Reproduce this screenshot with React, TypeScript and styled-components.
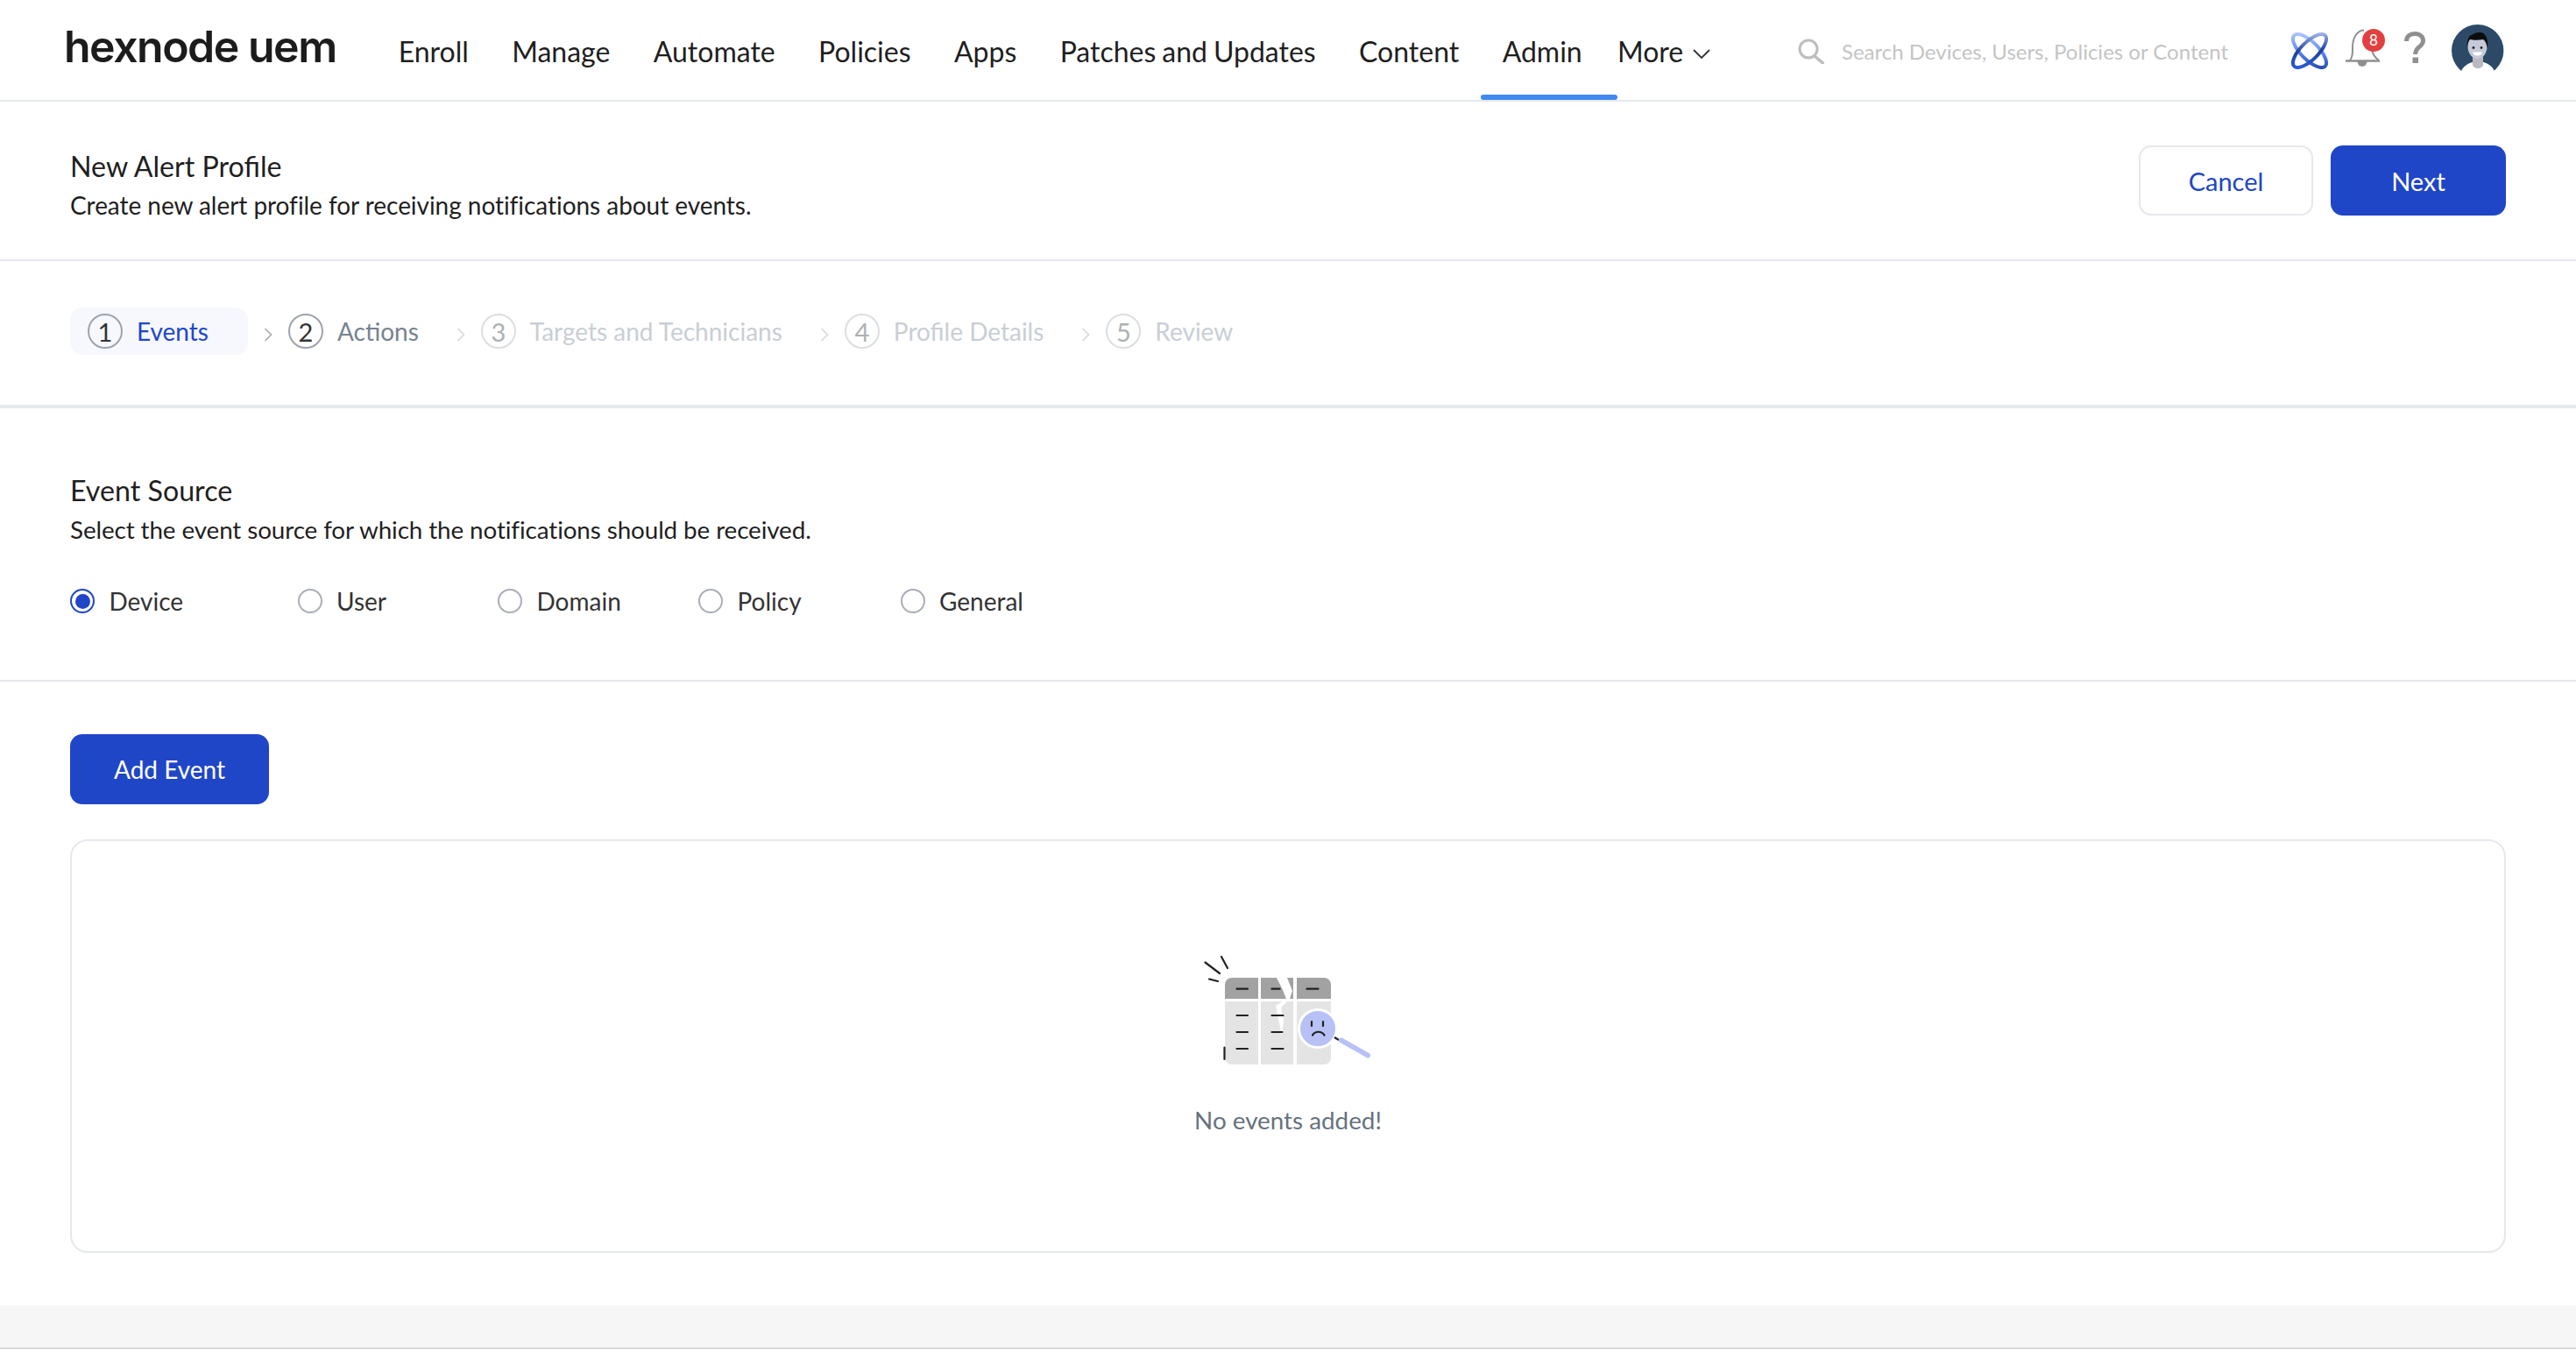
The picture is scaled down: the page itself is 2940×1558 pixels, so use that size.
import React from 'react';
import styled, { createGlobalStyle } from 'styled-components';

const Colors = {
  Ink: '#1f1f1f',
  Primary: '#2046c8',
  Accent: '#4089f0',
  Line: '#e5e8ec',
  Muted: '#76838f',
  Faded: '#c9ced5',
  Icon: '#8f8f8f',
};

const Global = createGlobalStyle`
  html, body { margin: 0; padding: 0; background: #fff; }
  body { font-family: Lato, "Liberation Sans", sans-serif; color: ${Colors.Ink}; }
  * { box-sizing: border-box; }
`;

const Page = styled.div`
  width: 2940px;
  height: 1558px;
  display: flex;
  flex-direction: column;
  overflow: hidden;
`;

const Header = styled.header`
  height: 116px;
  flex: none;
  display: flex;
  align-items: flex-start;
  padding: 0 82px 0 73px;
  border-bottom: 2px solid ${Colors.Line};
`;

const Logo = styled.div`
  width: 310px;
  margin-top: 23px;
  margin-right: 47px;
  font-family: Inter, sans-serif;
  font-size: 50px;
  line-height: 60px;
  font-weight: 600;
  letter-spacing: -1.500px;
  white-space: nowrap;
  color: #1c1c1c;
`;

const Nav = styled.nav`
  display: flex;
  height: 114px;
`;

const NavItem = styled.a<{ $active?: boolean; $flush?: boolean }>`
  position: relative;
  display: flex;
  align-items: center;
  gap: 11px;
  padding: 2px 24.700px 0 ${p => (p.$flush ? '0' : '24.700px')};
  min-width: ${p => (p.$active ? '156px' : '0')};
  font-size: 32px;
  word-spacing: -1.250px;
  white-space: nowrap;

  ${p =>
    p.$active &&
    `&:after {
      content: '';
      position: absolute;
      left: 0;
      right: 0;
      bottom: 0;
      height: 6px;
      border-radius: 3px;
      background: ${Colors.Accent};
    }`}
`;

const MoreChevron = styled.svg`
  margin-top: 6px;
`;

const Search = styled.div`
  margin-left: auto;
  margin-top: 44px;
  display: flex;
  align-items: center;
  gap: 20px;
  margin-right: 72px;
  height: 29px;
  font-size: 24px;
  color: #c4c4c4;
  white-space: nowrap;
`;

const IconSlot = styled.span<{ $top: number; $gap: number }>`
  position: relative;
  display: block;
  margin-top: ${p => p.$top}px;
  margin-right: ${p => p.$gap}px;
  line-height: 0;
`;

const Badge = styled.span`
  position: absolute;
  top: 0;
  left: 19px;
  width: 26px;
  height: 26px;
  border-radius: 50%;
  background: #e24040;
  color: #fff;
  font-size: 17px;
  line-height: 26px;
  text-align: center;
`;

const TitleBar = styled.section`
  height: 182px;
  flex: none;
  display: flex;
  align-items: center;
  justify-content: space-between;
  padding: 0 80px;
  border-bottom: 2px solid ${Colors.Line};
`;

const TitleText = styled.div`
  padding-top: 13px;
`;

const Title = styled.h1`
  margin: 0;
  font-size: 32.200px;
  line-height: 44px;
  font-weight: 400;
`;

const Desc = styled.p`
  margin: 0;
  font-size: 28px;
  line-height: 45px;
  letter-spacing: -0.050px;
`;

const SourceDesc = styled(Desc)`
  letter-spacing: -0.100px;
  font-size: 27.800px;
`;

const Actions = styled.div`
  display: flex;
  gap: 20px;
`;

const Btn = styled.button<{ $ghost?: boolean }>`
  height: 80px;
  width: ${p => (p.$ghost ? '199px' : '200px')};
  border-radius: 14px;
  font: inherit;
  font-size: 29px;
  border: ${p => (p.$ghost ? `2px solid ${Colors.Line}` : 'none')};
  background: ${p => (p.$ghost ? '#fff' : Colors.Primary)};
  color: ${p => (p.$ghost ? Colors.Primary : '#fff')};
`;

const AddButton = styled(Btn)`
  width: 227px;
  font-size: 28px;
`;

const StepBar = styled.section`
  height: 168px;
  flex: none;
  display: flex;
  align-items: flex-start;
  padding: 53px 80px 0;
  border-bottom: 4px solid ${Colors.Line};
`;

const Step = styled.div<{ $active?: boolean }>`
  height: 54px;
  display: flex;
  align-items: center;
  gap: 16px;
  padding: ${p => (p.$active ? '0 45px 0 20px' : '0 25px 0 0')};
  border-radius: 14px;
  background: ${p => (p.$active ? '#f6f8fe' : 'transparent')};
  font-size: 28px;
  white-space: nowrap;
`;

type StepState = 'active' | 'ready' | 'off';

const StepNum = styled.span<{ $state: StepState }>`
  width: 40px;
  height: 40px;
  flex: none;
  display: flex;
  align-items: center;
  justify-content: center;
  border-radius: 50%;
  font-size: 29px;
  border: 2px solid ${p => (p.$state === 'off' ? '#dcdee2' : '#9ea3ac')};
  color: ${p => (p.$state === 'off' ? '#aeb0b3' : '#333')};
`;

const StepLabel = styled.span<{ $state: StepState }>`
  color: ${p =>
    p.$state === 'active' ? Colors.Primary : p.$state === 'ready' ? Colors.Muted : Colors.Faded};
`;

const StepArrow = styled.svg`
  flex: none;
  margin: 23px 18px 0 18px;
`;

const SourceSection = styled.section`
  height: 312px;
  flex: none;
  padding: 72px 80px 0;
  border-bottom: 2px solid ${Colors.Line};
`;

const RadioRow = styled.div`
  display: grid;
  grid-template-columns: 259.500px 228.500px 229px 230.500px auto;
  justify-content: start;
  margin-top: 45px;
`;

const RadioItem = styled.label`
  display: flex;
  align-items: center;
  gap: 16.500px;
  height: 28px;
  font-size: 28px;
  color: #333;
`;

const RadioMark = styled.span<{ $on?: boolean }>`
  width: 28px;
  height: 28px;
  flex: none;
  display: flex;
  align-items: center;
  justify-content: center;
  border-radius: 50%;
  border: 2.500px solid ${p => (p.$on ? Colors.Primary : '#a9aeb8')};

  &:after {
    content: '';
    display: ${p => (p.$on ? 'block' : 'none')};
    width: 17px;
    height: 17px;
    border-radius: 50%;
    background: ${Colors.Primary};
  }
`;

const EventsSection = styled.section`
  flex: 1;
  padding: 60px 80px 0;
`;

const EmptyCard = styled.div`
  height: 472px;
  margin-top: 40px;
  padding-top: 120px;
  display: flex;
  flex-direction: column;
  align-items: center;
  border: 2px solid ${Colors.Line};
  border-radius: 20px;
`;

const EmptyText = styled.div`
  margin-top: 20px;
  font-size: 27.800px;
  line-height: 38px;
  color: #66727e;
`;

const FooterStrip = styled.div`
  height: 50px;
  flex: none;
  margin-bottom: 18px;
  background: #f6f6f6;
  border-bottom: 2px solid #d9d9d9;
`;

const SearchIcon = () => (
  <svg width="30" height="29" viewBox="0 0 30 29" fill="none" stroke="#bdbdbd">
    <circle cx="12" cy="12" r="10" strokeWidth="3" />
    <path d="M19 20l9.500 8" strokeWidth="3.500" strokeLinecap="round" />
  </svg>
);

const OrbitIcon = () => (
  <svg width="42" height="42" viewBox="0 0 42 42" fill="none">
    <defs>
      <linearGradient id="orbA" x1="4" y1="2" x2="38" y2="40" gradientUnits="userSpaceOnUse">
        <stop offset="0" stopColor="#c9d8fc" />
        <stop offset="0.5" stopColor="#5f8df2" />
        <stop offset="1" stopColor="#173a9e" />
      </linearGradient>
      <linearGradient id="orbB" x1="38" y1="2" x2="4" y2="40" gradientUnits="userSpaceOnUse">
        <stop offset="0" stopColor="#c9d8fc" />
        <stop offset="0.5" stopColor="#1f3f9e" />
        <stop offset="1" stopColor="#2f66f0" />
      </linearGradient>
    </defs>
    <ellipse cx="21" cy="21" rx="25" ry="10" transform="rotate(45 21 21)" stroke="url(#orbA)" strokeWidth="4" />
    <ellipse cx="21" cy="21" rx="25" ry="10" transform="rotate(-45 21 21)" stroke="url(#orbB)" strokeWidth="4" />
  </svg>
);

const BellIcon = () => (
  <svg width="45" height="44" viewBox="0 0 45 44" fill="none" stroke={Colors.Icon}>
    <path d="M5 36c3-4 3-8 3-15C8 9 14 1.500 21 1.500" strokeWidth="2" />
    <path d="M30 24c1 5 4 9 8 12" strokeWidth="2" />
    <path d="M0 36.500h39" strokeWidth="2.500" />
    <path d="M13.500 37h11a5.500 6 0 0 1-11 0z" fill={Colors.Icon} stroke="none" />
  </svg>
);

const HelpIcon = () => (
  <svg width="24" height="36" viewBox="0 0 24 36" fill="none" stroke={Colors.Icon}>
    <path d="M2.500 11C2.500 5 7 2.500 12 2.500c6 0 9.500 3.500 9.500 8 0 4.500-4 6.500-6 8.500-2 2-2.800 3-2.800 7" strokeWidth="5" />
    <path d="M9.500 29.500h6.500V36H9.500z" fill={Colors.Icon} stroke="none" />
  </svg>
);

const AvatarIcon = () => (
  <svg width="60" height="54" viewBox="0 0 60 54">
    <circle cx="29.700" cy="29.700" r="29.700" fill="#2c4a68" />
    <path d="M10 56c2-9 12-14 20-14s18 5 20 14z" fill="#fff" />
    <path d="M24 36h12v10c0 2-3 4-6 4s-6-2-6-4z" fill="#b9babf" />
    <ellipse cx="29.500" cy="25" rx="11" ry="14" fill="#c6cad8" />
    <path d="M18 27c-1-8 1-15 7-16 2-2 8-3 11-1 4 2 6 9 5 17-1-4-2-8-5-10-5 1-11 1-15 0-2 2-3 6-3 10z" fill="#0c0c0c" />
    <circle cx="25" cy="26.500" r="1.400" fill="#222" />
    <circle cx="34" cy="26.500" r="1.400" fill="#222" />
    <path d="M24 31.500h11c-1 3-3 4-5.500 4s-4.500-1-5.500-4z" fill="#fff" />
  </svg>
);

const NoEventsArt = () => (
  <svg width="260" height="160" viewBox="0 0 260 160" fill="none">
    <path d="M58 60V44a8 8 0 0 1 8-8h30v24z" fill="#a2a2a2" />
    <path d="M99 36h37v24H99z" fill="#a2a2a2" />
    <path d="M140 36h31a8 8 0 0 1 8 8v16h-39z" fill="#a2a2a2" />
    <path d="M58 63h38v72H66a8 8 0 0 1-8-8z" fill="#e4e4e4" />
    <path d="M99 63h37v72H99z" fill="#e4e4e4" />
    <path d="M140 63h39v64a8 8 0 0 1-8 8h-31z" fill="#e4e4e4" />
    <path d="M117 36l7 14 4 10-12 8 7 34 2-17-3-15 10-10 3-9-6-15z" fill="#fff" />
    <g stroke="#222" strokeWidth="2.200" strokeLinecap="round">
      <path d="M71.500 48.700h12.500M111.500 48.700h9M151.500 48.700h13" />
      <path d="M71.500 79h12.500M111.500 79h13M71.500 98h12.500M111.500 98h12M71.500 117h12.500M111.500 117h13" />
      <path d="M57.500 115.500v13.500M35.500 18.500L52 31M54 12l7 13M40 37.500l10 2.500" />
    </g>
    <circle cx="164" cy="94" r="21.500" fill="#b7c1f5" stroke="#fff" strokeWidth="3" />
    <path d="M157 86v5M170 86v5" stroke="#222" strokeWidth="2.200" strokeLinecap="round" />
    <path d="M158 101.500c3.500-5 10-5 13.500 0" stroke="#222" strokeWidth="2.200" strokeLinecap="round" />
    <path d="M183 104l5 3" stroke="#222" strokeWidth="2.500" />
    <path d="M191 107.500l30 17" stroke="#b7c1f5" strokeWidth="6" strokeLinecap="round" />
  </svg>
);

const navItems = ['Enroll', 'Manage', 'Automate', 'Policies', 'Apps', 'Patches and Updates', 'Content'];

const steps: { label: string; state: StepState }[] = [
  { label: 'Events', state: 'active' },
  { label: 'Actions', state: 'ready' },
  { label: 'Targets and Technicians', state: 'off' },
  { label: 'Profile Details', state: 'off' },
  { label: 'Review', state: 'off' },
];

const sources = ['Device', 'User', 'Domain', 'Policy', 'General'];

export default function App() {
  return (
    <Page>
      <Global />
      <Header>
        <Logo>hexnode uem</Logo>
        <Nav>
          {navItems.map(item => (
            <NavItem key={item}>{item}</NavItem>
          ))}
          <NavItem $active>Admin</NavItem>
          <NavItem $flush>
            More
            <MoreChevron width="20" height="11" viewBox="0 0 20 11" fill="none" stroke="#333" strokeWidth="1.800">
              <path d="M1 1l9 9 9-9" />
            </MoreChevron>
          </NavItem>
        </Nav>
        <Search>
          <SearchIcon />
          Search Devices, Users, Policies or Content
        </Search>
        <IconSlot $top={37} $gap={20}>
          <OrbitIcon />
        </IconSlot>
        <IconSlot $top={33} $gap={22}>
          <BellIcon />
          <Badge>8</Badge>
        </IconSlot>
        <IconSlot $top={36} $gap={30}>
          <HelpIcon />
        </IconSlot>
        <IconSlot $top={28} $gap={0}>
          <AvatarIcon />
        </IconSlot>
      </Header>

      <TitleBar>
        <TitleText>
          <Title>New Alert Profile</Title>
          <Desc>Create new alert profile for receiving notifications about events.</Desc>
        </TitleText>
        <Actions>
          <Btn $ghost>Cancel</Btn>
          <Btn>Next</Btn>
        </Actions>
      </TitleBar>

      <StepBar>
        {steps.map((s, i) => (
          <React.Fragment key={s.label}>
            {i > 0 && (
              <StepArrow width="10" height="16" viewBox="0 0 10 16" fill="none" stroke={s.state === 'off' ? '#d5d8dc' : '#a5aab0'} strokeWidth="1.600">
                <path d="M1.500 1l7 7-7 7" />
              </StepArrow>
            )}
            <Step $active={s.state === 'active'}>
              <StepNum $state={s.state}>{i + 1}</StepNum>
              <StepLabel $state={s.state}>{s.label}</StepLabel>
            </Step>
          </React.Fragment>
        ))}
      </StepBar>

      <SourceSection>
        <Title>Event Source</Title>
        <SourceDesc>Select the event source for which the notifications should be received.</SourceDesc>
        <RadioRow>
          {sources.map((s, i) => (
            <RadioItem key={s}>
              <RadioMark $on={i === 0} />
              {s}
            </RadioItem>
          ))}
        </RadioRow>
      </SourceSection>

      <EventsSection>
        <AddButton>Add Event</AddButton>
        <EmptyCard>
          <NoEventsArt />
          <EmptyText>No events added!</EmptyText>
        </EmptyCard>
      </EventsSection>

      <FooterStrip />
    </Page>
  );
}
